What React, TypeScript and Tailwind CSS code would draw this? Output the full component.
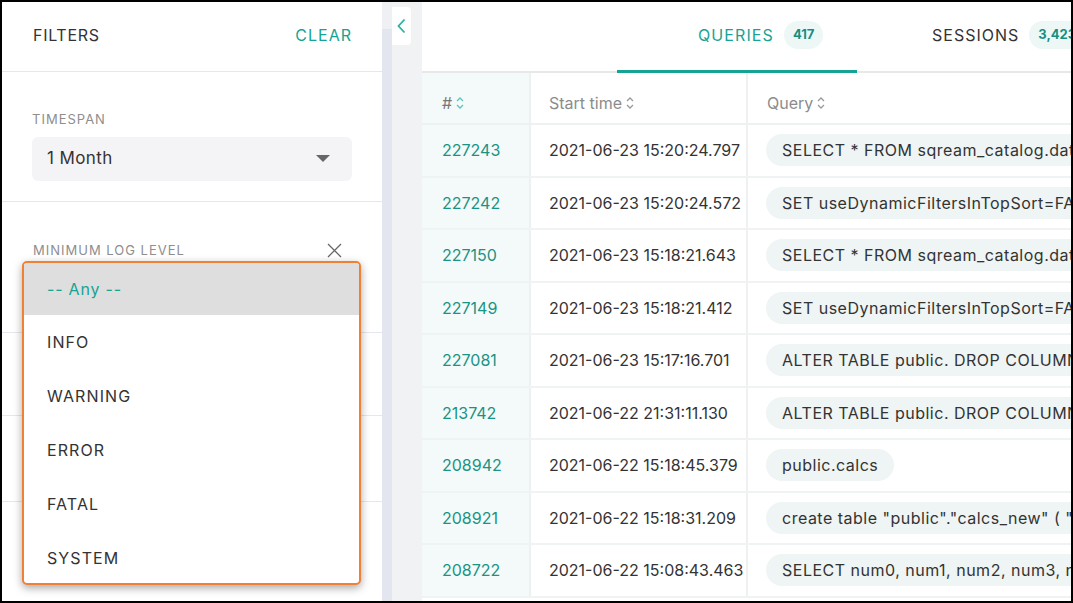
import React from 'react';

const teal = 'text-[#17a393]';

const rows: { id: string; time: string; query: string }[] = [
  { id: '227243', time: '2021-06-23 15:20:24.797', query: 'SELECT * FROM sqream_catalog.databases' },
  { id: '227242', time: '2021-06-23 15:20:24.572', query: 'SET useDynamicFiltersInTopSort=FALSE' },
  { id: '227150', time: '2021-06-23 15:18:21.643', query: 'SELECT * FROM sqream_catalog.databases' },
  { id: '227149', time: '2021-06-23 15:18:21.412', query: 'SET useDynamicFiltersInTopSort=FALSE' },
  { id: '227081', time: '2021-06-23 15:17:16.701', query: 'ALTER TABLE public. DROP COLUMN' },
  { id: '213742', time: '2021-06-22 21:31:11.130', query: 'ALTER TABLE public. DROP COLUMN' },
  { id: '208942', time: '2021-06-22 15:18:45.379', query: 'public.calcs' },
  { id: '208921', time: '2021-06-22 15:18:31.209', query: 'create table "public"."calcs_new" ( "key"' },
  { id: '208722', time: '2021-06-22 15:08:43.463', query: 'SELECT num0, num1, num2, num3, num4' },
];

const levels = ['INFO', 'WARNING', 'ERROR', 'FATAL', 'SYSTEM'];

const SortIcon: React.FC<{ active?: boolean }> = ({ active }) => (
  <svg width="8" height="14" viewBox="0 0 8 14" className="ml-1 inline-block" fill="none">
    <path d="M1 5 L4 2 L7 5" stroke={active ? '#5fc3b6' : '#9a9a9a'} strokeWidth="1.3" />
    <path d="M1 9 L4 12 L7 9" stroke={active ? '#5fc3b6' : '#9a9a9a'} strokeWidth="1.3" />
  </svg>
);

const FilterLabel: React.FC<{ children: React.ReactNode }> = ({ children }) => (
  <div className="text-[13px] tracking-[1px] text-[#8e8e8e] uppercase">{children}</div>
);

export default function App() {
  return (
    <div
      className="w-[1073px] h-[603px] border-2 border-black flex overflow-hidden bg-white text-[#333]"
      style={{ fontFamily: 'Inter, "Noto Sans", sans-serif' }}
    >
      {/* Filters panel */}
      <div className="relative w-[380px] h-full flex flex-col shrink-0 bg-white">
        <div className="h-[70px] flex items-center justify-between pl-[31px] pr-[30px] pb-[4px] border-b border-[#e6e6ef]">
          <span className="text-[16px] tracking-[0.7px]">FILTERS</span>
          <span className={`text-[16px] tracking-[1px] ${teal}`}>CLEAR</span>
        </div>
        <div className="h-[130px] pl-[30px] pr-[30px] pt-[38px] border-b border-[#e6e6ef]">
          <FilterLabel>TIMESPAN</FilterLabel>
          <div className="mt-[7px] h-[44px] bg-[#f4f4f6] rounded-md flex items-center justify-between pl-[15px] pr-[22px]">
            <span className="text-[17px] tracking-[0.4px]">1 Month</span>
            <svg width="14" height="8" viewBox="0 0 14 8"><path d="M0 0 L14 0 L7 7 Z" fill="#666" /></svg>
          </div>
        </div>
        <div className="h-[131px] pl-[31px] pr-[40px] pt-[39px] border-b border-[#e6e6ef]">
          <div className="flex items-center justify-between">
            <FilterLabel>MINIMUM LOG LEVEL</FilterLabel>
            <svg width="15" height="15" viewBox="0 0 15 15"><path d="M1 1 L14 14 M14 1 L1 14" stroke="#666" strokeWidth="1.3" /></svg>
          </div>
        </div>
        <div className="h-[83px] border-b border-[#e6e6ef]" />
        <div className="h-[86px] border-b border-[#e6e6ef]" />
        <div className="flex-1" />

        {/* open dropdown */}
        <div className="absolute left-[20px] top-[259px] w-[339px] h-[324px] border-2 border-[#f08034] rounded-[5px] bg-white shadow-[0_3px_8px_rgba(0,0,0,0.35)] overflow-hidden">
          <div className="h-[52px] bg-[#dedede] flex items-center pl-[23px]">
            <span className={`text-[16px] tracking-[0.8px] ${teal}`}>-- Any --</span>
          </div>
          {levels.map((l) => (
            <div key={l} className="h-[54px] flex items-center pl-[23px] text-[16px] tracking-[1.1px] text-[#333]">
              {l}
            </div>
          ))}
        </div>
      </div>

      {/* scrollbar track */}
      <div className="w-[10px] h-full flex flex-col shrink-0">
        <div className="h-[27px] bg-[#eef0f4]" />
        <div className="flex-1 bg-[#e3e5ef]" />
      </div>

      {/* collapse column */}
      <div className="w-[30px] h-full bg-[#f1f2f4] shrink-0 pt-[5px]">
        <div className="w-[19px] h-[38px] bg-white rounded-r-[4px] flex items-center justify-center">
          <svg width="9" height="16" viewBox="0 0 9 16"><path d="M7.5 1.5 L1.5 8 L7.5 14.5" stroke="#2bb3a3" strokeWidth="1.8" fill="none" /></svg>
        </div>
      </div>

      {/* main */}
      <div className="flex-1 min-w-0 h-full flex flex-col overflow-hidden bg-white">
        <div className="h-[71px] flex items-stretch pl-[195px] border-b-2 border-[#e8e8e8] shrink-0">
          <div className="w-[240px] shrink-0 flex items-center pl-[81px] pb-[3px] gap-[10px] border-b-[3px] border-[#17a393] -mb-[2px]">
            <span className={`text-[16px] tracking-[1.1px] ${teal}`}>QUERIES</span>
            <span className="h-[28px] px-[9px] rounded-full bg-[#edf8f6] flex items-center text-[13px] font-bold text-[#178f80]">417</span>
          </div>
          <div className="shrink-0 flex items-center pl-[75px] pb-[4px] gap-[10px]">
            <span className="text-[16px] tracking-[1px] text-[#333]">SESSIONS</span>
            <span className="h-[28px] px-[9px] rounded-full bg-[#edf8f6] flex items-center text-[13px] font-bold text-[#178f80]">3,423</span>
          </div>
        </div>

        <div className="flex flex-col">
          <div className="h-[52px] flex border-b-2 border-[#eef1f1] shrink-0">
            <div className="w-[109px] shrink-0 bg-[#f4fafa] border-r-2 border-[#eef1f1] flex items-center pl-[20px] pt-[9px] text-[16px] text-[#777]">
              #<SortIcon active />
            </div>
            <div className="w-[217px] shrink-0 border-r-2 border-[#eef1f1] flex items-center pl-[18px] pt-[9px] text-[16px] text-[#8c8c8c]">
              Start time<SortIcon />
            </div>
            <div className="flex-1 flex items-center pl-[19px] pt-[9px] text-[16px] text-[#8c8c8c]">
              Query<SortIcon />
            </div>
          </div>
          {rows.map((r) => (
            <div key={r.id} className="h-[52.5px] flex border-b-2 border-[#f0f3f3] shrink-0">
              <div className="w-[109px] shrink-0 bg-[#f4fafa] border-r-2 border-[#eef1f1] flex items-center pl-[20px] text-[16px] text-[#1a9384]">
                {r.id}
              </div>
              <div className="w-[217px] shrink-0 border-r-2 border-[#eef1f1] flex items-center pl-[18px] text-[16px] text-[#333] whitespace-nowrap overflow-hidden">
                {r.time}
              </div>
              <div className="flex-1 min-w-0 flex items-center pl-[18px] overflow-hidden">
                <span className="h-[32px] px-[16px] rounded-full bg-[#eef5f4] flex items-center text-[16px] tracking-[0.5px] text-[#333] whitespace-nowrap">
                  {r.query}
                </span>
              </div>
            </div>
          ))}
        </div>
      </div>
    </div>
  );
}
